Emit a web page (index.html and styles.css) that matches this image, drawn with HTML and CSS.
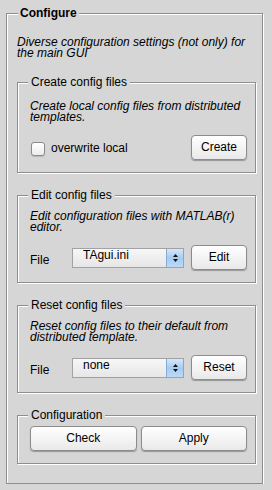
FILE: index.html
```html
<!DOCTYPE html>
<html lang="en">
<head>
  <meta charset="UTF-8" />
  <title>Configure</title>
  <link rel="stylesheet" href="styles.css">
</head>
<body>
  <fieldset class="panel">
    <legend>Configure</legend>
    <p class="desc">Diverse configuration settings (not only) for the main GUI</p>

    <fieldset class="group group-create">
      <legend>Create config files</legend>
      <p class="desc">Create local config files from distributed templates.</p>
      <div class="row">
        <label class="check"><span class="check-box"></span>overwrite local</label>
        <button class="btn">Create</button>
      </div>
    </fieldset>

    <fieldset class="group">
      <legend>Edit config files</legend>
      <p class="desc">Edit configuration files with MATLAB(r) editor.</p>
      <div class="row">
        <span class="field-label">File</span>
        <div class="popup">
          <span class="popup-value">TAgui.ini</span>
          <span class="popup-arrows">
            <svg width="7" height="10" viewBox="0 0 7 10"><path d="M1 4 L3.5 1 L6 4Z M1 6 L3.5 9 L6 6Z" fill="#111"/></svg>
          </span>
        </div>
        <button class="btn">Edit</button>
      </div>
    </fieldset>

    <fieldset class="group">
      <legend>Reset config files</legend>
      <p class="desc">Reset config files to their default from distributed template.</p>
      <div class="row">
        <span class="field-label">File</span>
        <div class="popup">
          <span class="popup-value">none</span>
          <span class="popup-arrows">
            <svg width="7" height="10" viewBox="0 0 7 10"><path d="M1 4 L3.5 1 L6 4Z M1 6 L3.5 9 L6 6Z" fill="#111"/></svg>
          </span>
        </div>
        <button class="btn">Reset</button>
      </div>
    </fieldset>

    <fieldset class="group group-config">
      <legend>Configuration</legend>
      <div class="btn-pair">
        <button class="btn">Check</button>
        <button class="btn">Apply</button>
      </div>
    </fieldset>
  </fieldset>
</body>
</html>
```

FILE: styles.css
```css
* {
  margin: 0;
  padding: 0;
  box-sizing: border-box;
}

body {
  font-family: 'Liberation Sans', Arial, sans-serif;
  font-size: 12px;
  background: #d6d6d6;
  color: #000;
}

/* etched frames: grey line with a white line 1px below/right */
fieldset {
  border: 1px solid #8e8e8e;
  box-shadow: 1px 1px 0 #fff, inset 1px 1px 0 #fff;
}

legend {
  background: #d6d6d6;
}

.panel {
  margin: 6px 9px 0 6px;
  padding: 16px 6px 19px 10px;
}

.panel > legend {
  font-weight: 700;
  line-height: 15px;
  padding: 0 2px;
  margin-left: 1px;
}

.desc {
  font-style: italic;
  line-height: 11px;
}

.group {
  margin-top: 15px;
  padding: 9px 8px 12px 12px;
}

.group > legend {
  line-height: 14px;
  padding: 0 3px;
  margin-left: -2px;
}

.group-create {
  margin-top: 16px;
  padding-top: 12px;
}

.group-config {
  padding-top: 4px;
}

.row {
  display: flex;
  align-items: center;
  margin-top: 12px;
}

.check {
  display: flex;
  align-items: center;
  line-height: 14px;
}

.check-box {
  width: 14px;
  height: 14px;
  margin: 3px 6px 0 1px;
  border: 1px solid #8a8a8a;
  border-radius: 3px;
  background: linear-gradient(#fff, #ececec);
  box-shadow: 0 1px 1px rgba(0, 0, 0, 0.15);
}

.field-label {
  flex: none;
  width: 42px;
  padding-top: 4px;
  line-height: 14px;
}

.popup {
  display: flex;
  align-items: center;
  width: 112px;
  height: 20px;
  border: 1px solid #a2a2a2;
  background: linear-gradient(#f7f7f7, #e6e6e6);
}

.popup-value {
  flex: 1;
  line-height: 12px;
  padding: 0 0 5px 10px;
}

.popup-arrows {
  align-self: stretch;
  width: 17px;
  display: flex;
  align-items: center;
  justify-content: center;
  border-left: 1px solid #8aaad6;
  background: linear-gradient(#d6e8fb, #a5cbf2 50%, #bcd9f6);
}

.btn {
  height: 25px;
  width: 56px;
  margin-left: auto;
  padding-bottom: 2px;
  font: 12px 'Liberation Sans', Arial, sans-serif;
  color: #000;
  border: 1px solid #8c8c8c;
  border-radius: 4px;
  background: linear-gradient(#fff, #f4f4f4 50%, #e9e9e9);
  box-shadow: 0 1px 1px rgba(0, 0, 0, 0.3);
}

.btn-pair {
  display: flex;
  gap: 4px;
}

.btn-pair .btn {
  flex: 1;
  width: auto;
  margin-left: 0;
  padding-bottom: 1px;
}
```
